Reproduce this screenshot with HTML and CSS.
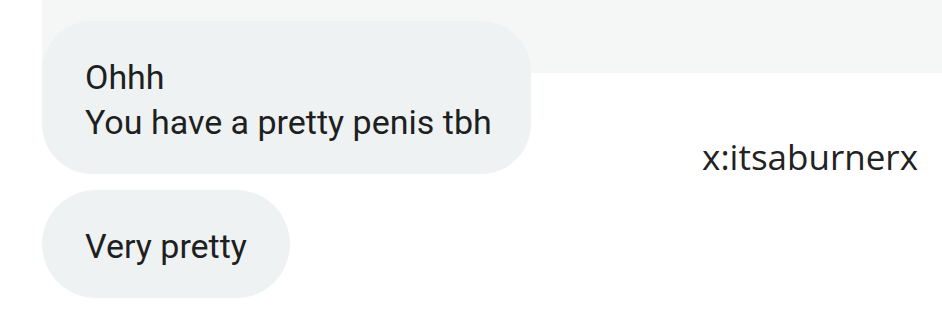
FILE: index.html
```html
<!DOCTYPE html>
<html lang="en">
<head>
    <meta charset="UTF-8">
    <title>Chat</title>
    <link rel="stylesheet" href="styles.css">
</head>
<body>
<div class="chat">
    <div class="msgs">
        <div class="bubble big">Ohhh<br>You have a pretty penis tbh</div>
        <div class="bubble small">Very pretty</div>
    </div>
    <div class="tag">x:itsaburnerx</div>
</div>
</body>
</html>
```

FILE: styles.css
```css
*{box-sizing:border-box;}
html,body{margin:0;background:#fff;}
body{width:942px;height:314px;overflow:hidden;font-family:Roboto,"Noto Sans",sans-serif;color:#1e1f21;}
.chat{display:flex;justify-content:space-between;padding:21px 24px 0 42px;height:314px;background:linear-gradient(#f5f7f7,#f5f7f7) no-repeat right top/900px 73px;}
.msgs{display:flex;flex-direction:column;align-items:flex-start;gap:16px;}
.bubble{background:#eff2f3;font-size:34px;line-height:45px;padding:0 43px;white-space:nowrap;}
.big{height:153px;border-radius:50px;padding-top:34px;width:489px;}
.small{height:108px;border-radius:54px;display:flex;align-items:center;padding-top:4px;}
.tag{font-family:"Open Sans",sans-serif;font-size:35px;color:#222;margin-top:112px;}
```
